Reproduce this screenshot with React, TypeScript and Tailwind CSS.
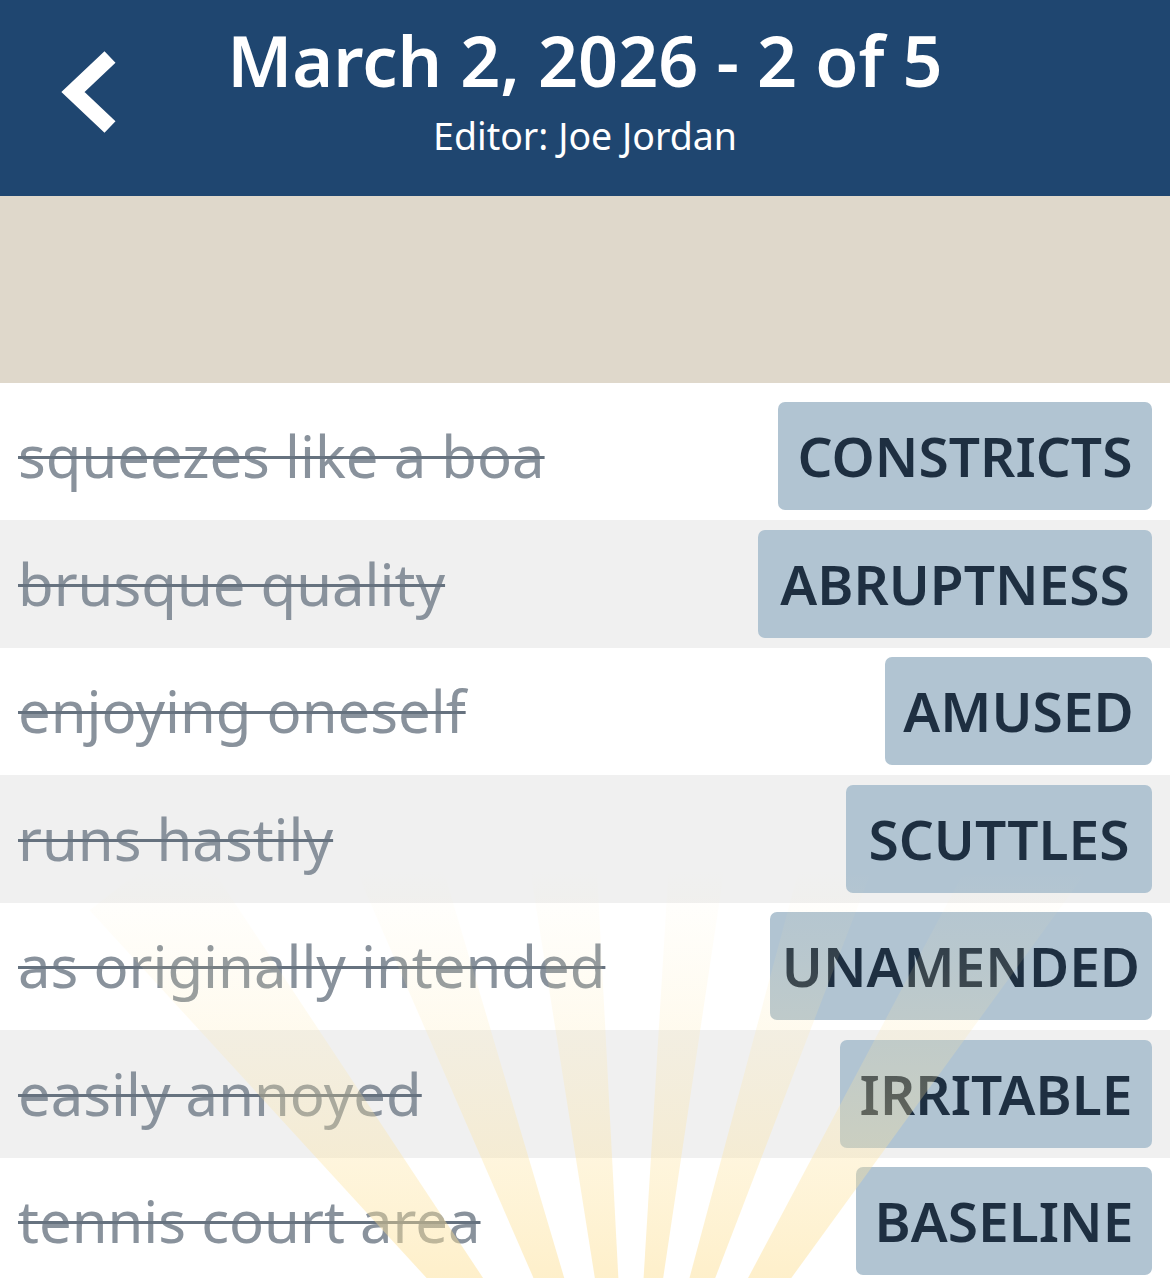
type Clue = {
  clue: string;
  answer: string;
  width: string;
};

const clues: Clue[] = [
  { clue: "squeezes like a boa", answer: "CONSTRICTS", width: "w-[374px]" },
  { clue: "brusque quality", answer: "ABRUPTNESS", width: "w-[394px]" },
  { clue: "enjoying oneself", answer: "AMUSED", width: "w-[267px]" },
  { clue: "runs hastily", answer: "SCUTTLES", width: "w-[306px]" },
  { clue: "as originally intended", answer: "UNAMENDED", width: "w-[382px]" },
  { clue: "easily annoyed", answer: "IRRITABLE", width: "w-[312px]" },
  { clue: "tennis court area", answer: "BASELINE", width: "w-[296px]" },
];

// faint sun rays fanning out of a point below the bottom edge
const Rays = () => {
  const cx = 630;
  const cy = 1500;
  const r = 800;
  const rays = [
    { a: -38, w: 9 },
    { a: -20, w: 7 },
    { a: -6, w: 6 },
    { a: 6, w: 5 },
    { a: 18, w: 6 },
    { a: 32, w: 8 },
  ];
  const wedge = (a: number, w: number) => {
    const a1 = ((a - w / 2 - 90) * Math.PI) / 180;
    const a2 = ((a + w / 2 - 90) * Math.PI) / 180;
    return `M${cx},${cy} L${cx + r * Math.cos(a1)},${cy + r * Math.sin(a1)} L${cx + r * Math.cos(a2)},${cy + r * Math.sin(a2)} Z`;
  };
  return (
    <svg
      className="pointer-events-none absolute inset-0 h-full w-full"
      viewBox="0 0 1170 1278"
      preserveAspectRatio="none"
    >
      <defs>
        <linearGradient id="ray" x1="0" y1="870" x2="0" y2="1278" gradientUnits="userSpaceOnUse">
          <stop offset="0" stopColor="#fde9ad" stopOpacity="0" />
          <stop offset="0.45" stopColor="#fde6a4" stopOpacity="0.22" />
          <stop offset="1" stopColor="#fde096" stopOpacity="0.5" />
        </linearGradient>
      </defs>
      {rays.map((ray, i) => (
        <path key={i} d={wedge(ray.a, ray.w)} fill="url(#ray)" />
      ))}
    </svg>
  );
};

export default function App() {
  return (
    <div className="relative h-[1278px] w-[1170px] overflow-hidden bg-white font-['Noto_Sans',sans-serif]">
      <header className="grid h-[196px] grid-cols-[1fr_auto_1fr] items-start bg-[#1f4670] text-white">
        <div className="pl-[60px] pt-[50px]">
          <svg width="58" height="84" viewBox="0 0 58 84" fill="none">
            <path d="M50 7 L13 42 L50 77" stroke="white" strokeWidth="16" strokeLinejoin="miter" />
          </svg>
        </div>
        <div className="flex flex-col items-center pt-[18px]">
          <h1 className="text-[70px] font-semibold leading-[84px]">
            March 2, 2026 - 2 of 5
          </h1>
          <p className="mt-[12px] text-[37.5px] leading-[44px]">Editor: Joe Jordan</p>
        </div>
        <div />
      </header>

      <div className="h-[187px] bg-[#dfd8cb]" />

      <div className="pt-[9.5px]">
        {clues.map((c, i) => (
          <div
            key={c.answer}
            className={`flex h-[127.5px] items-center justify-between pl-[18px] pr-[18px] ${
              i % 2 ? "bg-[#f0f0f0]" : "bg-white"
            }`}
          >
            <span className="text-[58px] leading-[70px] text-[#89929c] line-through decoration-[#66727f] decoration-[3px]">
              {c.clue}
            </span>
            <div
              className={`flex h-[108px] items-center justify-center rounded-[7px] bg-[#b1c4d2] text-[55px] font-semibold text-[#1e2f41] ${c.width}`}
            >
              {c.answer}
            </div>
          </div>
        ))}
      </div>

      <Rays />
    </div>
  );
}
